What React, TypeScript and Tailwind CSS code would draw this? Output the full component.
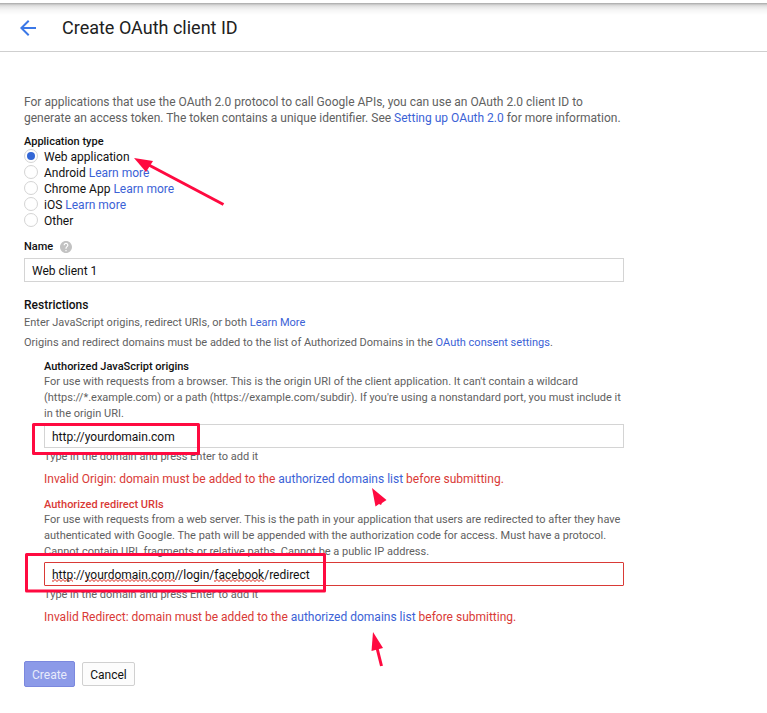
import type { ReactNode } from "react";

function Link({ children }: { children: ReactNode }) {
  return <a className="text-[#3b62d6]">{children}</a>;
}

const applicationTypes = [
  { label: "Web application", more: false, checked: true },
  { label: "Android", more: true, checked: false },
  { label: "Chrome App", more: true, checked: false },
  { label: "iOS", more: true, checked: false },
  { label: "Other", more: false, checked: false },
];

function RadioRow({ label, more, checked }: { label: string; more: boolean; checked: boolean }) {
  return (
    <label className="flex h-4 items-start">
      <span className="mr-1.5 flex size-3.5 shrink-0 items-center justify-center rounded-full border border-[#d4d4d4] bg-white">
        {checked && <span className="size-2 rounded-full bg-[#3367d6]" />}
      </span>
      <span className="whitespace-pre">
        {label}
        {more && (
          <>
            {" "}
            <Link>Learn more</Link>
          </>
        )}
      </span>
    </label>
  );
}

function Misspelled({ children }: { children: ReactNode }) {
  return (
    <span className="inline-block h-[15px] bg-[radial-gradient(circle_at_1px_2px,#e0453a_0.5px,transparent_1px),radial-gradient(circle_at_3px_1px,#e0453a_0.5px,transparent_1px)] bg-[length:4px_3px] bg-bottom-left bg-repeat-x">
      {children}
    </span>
  );
}

function Annotations() {
  return (
    <svg className="pointer-events-none absolute top-0 left-0" width="767" height="713" fill="none">
      <g stroke="#ff0a40" strokeWidth="3" strokeLinejoin="round">
        <rect x="33.5" y="424.500" width="165" height="29" />
        <rect x="26.5" y="554.500" width="298" height="36.500" />
        <path d="M146 163.500L223.500 204.500" />
        <path d="M377 648L381.500 666" />
      </g>
      <g fill="#ff0a40">
        <path d="M134 158L153 161L146 172Z" />
        <path d="M372 488L386.500 500L382 503L381 505L379 504L375.500 506.500Z" />
        <path d="M373 632L383 648L371.500 651Z" />
      </g>
    </svg>
  );
}

export default function App() {
  return (
    <div className="relative h-[713px] w-[767px] overflow-hidden bg-white font-[Roboto,sans-serif] text-xs leading-4 text-[#111]">
      <div className="h-[3px]" />
      <header className="flex h-[49px] items-center border-b border-[#cfcfcf] bg-[linear-gradient(#a9a9a9_0px,#bcbcbc_1px,#d6d6d6_2px,#e8e8e8_4px,#f5f5f5_7px,#fff_12px)] pt-0.5 pl-5">
        <svg width="16" height="16" viewBox="4 4 16 16" fill="#3b78e7">
          <path d="M20 11H7.830l5.590-5.590L12 4l-8 8 8 8 1.410-1.410L7.830 13H20v-2z" />
        </svg>
        <h1 className="ml-[26px] text-lg text-[#212121]">Create OAuth client ID</h1>
      </header>

      <main className="pt-[42px] pl-6">
        <p className="whitespace-nowrap text-[#616161]">
          For applications that use the OAuth 2.0 protocol to call Google APIs, you can use an OAuth 2.0 client ID to
          <br />
          generate an access token. The token contains a unique identifier. See <Link>Setting up OAuth 2.0</Link> for
          more information.
        </p>

        <h2 className="mt-2 text-[11px] font-medium leading-4">Application type</h2>
        <div className="-mt-px">
          {applicationTypes.map((t) => (
            <RadioRow key={t.label} {...t} />
          ))}
        </div>

        <div className="mt-[10px] flex items-center text-[11px] font-medium leading-4">
          Name
          <svg className="ml-[7px]" width="12" height="12" viewBox="2 2 20 20" fill="#c2c2c2">
            <path d="M12 2C6.480 2 2 6.480 2 12s4.480 10 10 10 10-4.480 10-10S17.520 2 12 2zm1 17h-2v-2h2v2zm2.070-7.750l-.9.920C13.450 12.900 13 13.500 13 15h-2v-.5c0-1.100.45-2.100 1.170-2.830l1.240-1.260c.37-.36.590-.86.590-1.410 0-1.100-.9-2-2-2s-2 .9-2 2H8c0-2.210 1.790-4 4-4s4 1.790 4 4c0 .88-.36 1.680-.93 2.250z" />
          </svg>
        </div>
        <div className="mt-[3px] flex h-6 w-[600px] items-center border border-[#d4d4d4] pt-px pl-[7px]">
          Web client 1
        </div>

        <h2 className="mt-[15px] font-medium">Restrictions</h2>
        <p className="mt-0.5 text-[11px] leading-4 text-[#616161]">
          Enter JavaScript origins, redirect URIs, or both <Link>Learn More</Link>
        </p>
        <p className="mt-1 text-[11px] leading-4 text-[#616161]">
          Origins and redirect domains must be added to the list of Authorized Domains in the{" "}
          <Link>OAuth consent settings</Link>.
        </p>

        <section className="mt-2 ml-5 w-[580px]">
          <h3 className="text-[11px] font-medium leading-4">Authorized JavaScript origins</h3>
          <p className="-mt-px whitespace-nowrap text-[11px] leading-4 text-[#616161]">
            For use with requests from a browser. This is the origin URI of the client application. It can't contain a
            wildcard
            <br />
            (https://*.example.com) or a path (https://example.com/subdir). If you're using a nonstandard port, you must
            include it
            <br />
            in the origin URI.
          </p>
          <div className="mt-0.5 flex h-6 items-center border border-[#d4d4d4] pt-px pl-[7px]">
            http://yourdomain.com
          </div>
          <p className="mt-px text-[11px] leading-4 text-[#616161]">Type in the domain and press Enter to add it</p>
          <p className="mt-1.5 text-[#d93a36]">
            Invalid Origin: domain must be added to the <Link>authorized domains list</Link> before submitting.
          </p>
        </section>

        <section className="mt-[10px] ml-5 w-[580px]">
          <h3 className="text-[11px] font-medium leading-4 text-[#d93a36]">Authorized redirect URIs</h3>
          <p className="-mt-px whitespace-nowrap text-[11px] leading-4 text-[#616161]">
            For use with requests from a web server. This is the path in your application that users are redirected to
            after they have
            <br />
            authenticated with Google. The path will be appended with the authorization code for access. Must have a
            protocol.
            <br />
            Cannot contain URL fragments or relative paths. Cannot be a public IP address.
          </p>
          <div className="mt-0.5 flex h-6 items-center rounded-[1px] border border-[#d93a36] pt-px pl-[7px]">
            <span>
              <Misspelled>http</Misspelled>://<Misspelled>yourdomain.com</Misspelled>//login/
              <Misspelled>facebook</Misspelled>/redirect
            </span>
          </div>
          <p className="mt-px text-[11px] leading-4 text-[#616161]">Type in the domain and press Enter to add it</p>
          <p className="mt-1.5 text-[#d93a36]">
            Invalid Redirect: domain must be added to the <Link>authorized domains list</Link> before submitting.
          </p>
        </section>

        <div className="mt-9 flex items-center gap-[7px]">
          <button className="h-[26px] w-[51px] rounded-[2px] border border-[#7b88de] bg-[#8c9ae8] pt-px text-[#e8ebfb]">
            Create
          </button>
          <button className="h-6 w-[53px] rounded-[2px] border border-[#d0d0d0] bg-[#fcfcfc] pt-px">Cancel</button>
        </div>
      </main>

      <Annotations />
    </div>
  );
}
